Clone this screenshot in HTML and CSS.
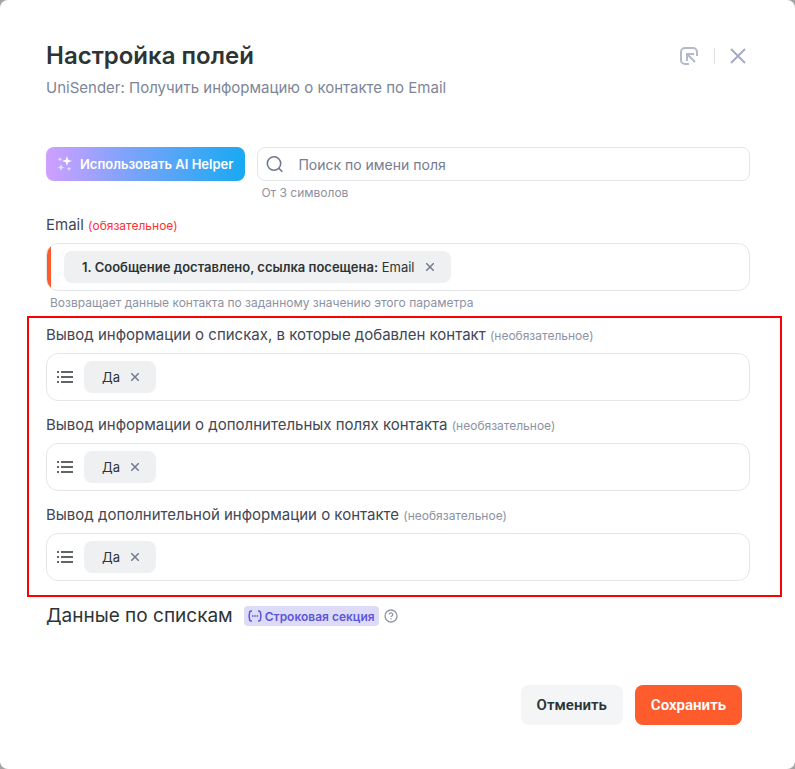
FILE: index.html
```html
<!DOCTYPE html>
<html lang="ru">
<head>
    <meta charset="UTF-8">
    <meta name="viewport" content="width=device-width, initial-scale=1.0">
    <title>Настройка полей</title>
    <link rel="stylesheet" href="styles.css">
</head>
<body>
    <main class="modal">
        <header class="header">
            <div class="header-text">
                <h1>Настройка полей</h1>
                <p>UniSender: Получить информацию о контакте по Email</p>
            </div>
            <div class="header-actions">
                <button type="button" class="icon-btn" aria-label="Свернуть">
                    <svg width="20" height="20" viewBox="0 0 20 20" fill="none" stroke="#b4b9cb" stroke-width="2" stroke-linejoin="miter">
                        <path d="M18 10V6a4 4 0 0 0-4-4H6a4 4 0 0 0-4 4v8a4 4 0 0 0 4 4h4"/>
                        <path d="M8 15V8h7M8 8l8 8"/>
                    </svg>
                </button>
                <span class="divider"></span>
                <button type="button" class="icon-btn" aria-label="Закрыть">
                    <svg width="16" height="16" viewBox="0 0 16 16" fill="none" stroke="#a5acc2" stroke-width="2">
                        <path d="M1 1l14 14M15 1L1 15"/>
                    </svg>
                </button>
            </div>
        </header>

        <div class="toolbar">
            <button type="button" class="ai-btn">
                <svg width="16" height="16" viewBox="0 0 16 16" fill="#d5e6ff">
                    <path fill="#fff" d="M10 0l1.200 3.800L15 5l-3.800 1.200L10 10 8.800 6.200 5 5l3.800-1.200z"/>
                    <path d="M4 8l1 2.500L7.500 11.500 5 12.500 4 15l-1-2.500L.5 11.500 3 10.500z"/>
                    <path d="M3 1l.7 1.600L5.300 3.300l-1.600.7L3 5.600l-.7-1.600L.7 3.300l1.600-.7z"/>
                    <path d="M12 10.500l.7 1.600 1.600.7-1.600.7-.7 1.600-.7-1.600-1.600-.7 1.600-.7z"/>
                </svg>
                Использовать AI Helper
            </button>
            <div class="search">
                <div class="search-box">
                    <svg width="18" height="18" viewBox="0 0 18 18" fill="none" stroke="#6f788d" stroke-width="1.600">
                        <circle cx="8" cy="8.500" r="6.700"/>
                        <path d="M12.700 13.200l3.600 3.600"/>
                    </svg>
                    <input type="text" id="search" placeholder="Поиск по имени поля">
                </div>
                <label class="hint" for="search">От 3 символов</label>
            </div>
        </div>

        <div class="field">
            <label for="email">Email <small class="required">(обязательное)</small></label>
            <div class="field-box accent">
                <span class="tag">
                    <span><b>1. Сообщение доставлено, ссылка посещена:</b> Email</span>
                    <button type="button" aria-label="Удалить"><svg width="8" height="8" viewBox="0 0 8 8"><path d="M0 0l8 8M8 0L0 8"/></svg></button>
                </span>
                <input type="text" id="email">
            </div>
            <p class="hint">Возвращает данные контакта по заданному значению этого параметра</p>
        </div>

        <section class="highlight">
            <div class="field">
                <label for="lists">Вывод информации о списках, в которые добавлен контакт <small>(необязательное)</small></label>
                <div class="field-box">
                    <svg class="list-icon" width="16" height="14" viewBox="0 0 16 14"><path d="M0 2h2M4 2h12M0 7h2M4 7h12M0 12h2M4 12h12"/></svg>
                    <span class="tag">
                        <span>Да</span>
                        <button type="button" aria-label="Удалить"><svg width="8" height="8" viewBox="0 0 8 8"><path d="M0 0l8 8M8 0L0 8"/></svg></button>
                    </span>
                    <input type="text" id="lists">
                </div>
            </div>
            <div class="field">
                <label for="extra">Вывод информации о дополнительных полях контакта <small>(необязательное)</small></label>
                <div class="field-box">
                    <svg class="list-icon" width="16" height="14" viewBox="0 0 16 14"><path d="M0 2h2M4 2h12M0 7h2M4 7h12M0 12h2M4 12h12"/></svg>
                    <span class="tag">
                        <span>Да</span>
                        <button type="button" aria-label="Удалить"><svg width="8" height="8" viewBox="0 0 8 8"><path d="M0 0l8 8M8 0L0 8"/></svg></button>
                    </span>
                    <input type="text" id="extra">
                </div>
            </div>
            <div class="field">
                <label for="details">Вывод дополнительной информации о контакте <small>(необязательное)</small></label>
                <div class="field-box">
                    <svg class="list-icon" width="16" height="14" viewBox="0 0 16 14"><path d="M0 2h2M4 2h12M0 7h2M4 7h12M0 12h2M4 12h12"/></svg>
                    <span class="tag">
                        <span>Да</span>
                        <button type="button" aria-label="Удалить"><svg width="8" height="8" viewBox="0 0 8 8"><path d="M0 0l8 8M8 0L0 8"/></svg></button>
                    </span>
                    <input type="text" id="details">
                </div>
            </div>
        </section>

        <div class="section-title">
            <h2>Данные по спискам</h2>
            <span class="badge">
                <svg width="14" height="12" viewBox="0 0 14 12" fill="none" stroke="#5f55d8" stroke-width="1.500">
                    <path d="M4 1H3a1.500 1.500 0 0 0-1.500 1.500v1.500L1 6l.5 2v1.500A1.500 1.500 0 0 0 3 11h1M10 1h1a1.500 1.500 0 0 1 1.500 1.500v1.500l.5 2-.5 2v1.500A1.500 1.500 0 0 1 11 11h-1"/>
                    <path d="M4 6h1.500M6.300 6h1.500M8.600 6h1.500"/>
                </svg>
                Строковая секция
            </span>
            <svg width="14" height="14" viewBox="0 0 14 14" fill="none" stroke="#9096a8" stroke-width="1.300">
                <circle cx="7" cy="7" r="6"/>
                <path d="M5.300 5.500a1.700 1.700 0 1 1 2.500 1.500c-.5.3-.8.5-.8 1M7 9.200v1.300"/>
            </svg>
        </div>

        <footer class="footer">
            <button type="button" class="btn">Отменить</button>
            <button type="button" class="btn primary">Сохранить</button>
        </footer>
    </main>
</body>
</html>
```
FILE: styles.css
```css
* {
    box-sizing: border-box;
}

body {
    margin: 0;
    background: #a3a3a3;
    font-family: Inter, "Noto Sans", sans-serif;
    color: #2d3436;
}

h1, h2, p {
    margin: 0;
}

button {
    border: none;
    padding: 0;
    background: none;
    font-family: inherit;
    cursor: pointer;
}

svg {
    display: block;
    flex-shrink: 0;
}

.modal {
    min-height: 100vh;
    padding: 40px 45px 44px 46px;
    border-radius: 8px;
    background: #fff;
}

.header {
    display: flex;
    justify-content: space-between;
    align-items: flex-start;
    margin-bottom: 49px;
}

.header h1 {
    font-size: 24px;
    font-weight: 600;
    line-height: 32px;
}

.header p {
    margin-top: 6px;
    font-size: 15px;
    line-height: 20px;
    color: #7d8599;
}

.header-actions {
    display: flex;
    align-items: center;
    gap: 14px;
    height: 32px;
    padding-right: 3px;
}

.divider {
    width: 1px;
    height: 16px;
    background: #dddfe5;
}

.icon-btn {
    padding: 0 1px;
}

.toolbar {
    display: flex;
    align-items: flex-start;
    gap: 12px;
    margin-bottom: 14px;
}

.ai-btn {
    display: flex;
    align-items: center;
    gap: 7px;
    height: 34px;
    padding: 0 12px 0 11px;
    border-radius: 8px;
    background: linear-gradient(90deg, #d09fff, #7fa3fa 40%, #18a9f2);
    color: #fff;
    font-size: 13px;
    font-weight: 600;
    white-space: nowrap;
}

.search {
    flex: 1;
}

.search-box {
    display: flex;
    align-items: center;
    gap: 14px;
    height: 34px;
    padding: 0 8px;
    border: 1px solid #e5e6ea;
    border-radius: 8px;
}

input {
    flex: 1;
    min-width: 0;
    padding: 0;
    border: none;
    outline: none;
    background: none;
    font-family: inherit;
    font-size: 14px;
}

input::placeholder {
    color: #747c90;
}

.hint {
    display: block;
    margin-top: 4px;
    padding-left: 4px;
    font-size: 12px;
    line-height: 16px;
    color: #8c92a4;
}

.field > label {
    display: block;
    margin-bottom: 8px;
    font-size: 15px;
    line-height: 20px;
    color: #414754;
}

.field small {
    font-size: 12px;
    line-height: 1;
    color: #8c92a4;
}

.field small.required {
    color: #ff2f36;
}

.field-box {
    display: flex;
    align-items: center;
    gap: 11px;
    min-height: 48px;
    padding: 7px 10px;
    border: 1px solid #e5e6ea;
    border-radius: 12px;
}

.field-box.accent {
    padding-left: 17px;
    background: linear-gradient(#ff5c2e, #ff5c2e) left / 4px 100% no-repeat;
}

.tag {
    display: flex;
    align-items: center;
    gap: 11px;
    height: 32px;
    padding: 0 17px 0 18px;
    border-radius: 8px;
    background: #eff0f2;
    font-size: 13px;
}

.tag b {
    font-weight: 600;
}

.tag svg {
    stroke: #747a90;
    stroke-width: 1.500;
}

.list-icon {
    stroke: #2d3436;
    stroke-width: 1.500;
}

.highlight {
    display: grid;
    gap: 14px;
    margin: 5px -32px 5px -19px;
    padding: 7px 30px 14px 17px;
    border: 2px solid #f00;
}

.section-title {
    display: flex;
    align-items: center;
    gap: 5px;
}

.section-title h2 {
    margin-right: 6px;
    font-size: 19px;
    font-weight: 400;
    line-height: 28px;
}

.badge {
    display: flex;
    align-items: center;
    gap: 3px;
    height: 20px;
    padding: 0 4px;
    border-radius: 4px;
    background: #dddcf8;
    color: #5f55d8;
    font-size: 12px;
    font-weight: 600;
}

.footer {
    display: flex;
    justify-content: flex-end;
    gap: 12px;
    margin-top: 55px;
    padding-right: 8px;
}

.btn {
    height: 40px;
    padding: 0 16px;
    border-radius: 8px;
    background: #f3f5f7;
    color: #2d3436;
    font-family: Roboto, sans-serif;
    font-size: 15px;
    font-weight: 600;
}

.btn.primary {
    background: #ff5c2e;
    color: #fff;
}
```
